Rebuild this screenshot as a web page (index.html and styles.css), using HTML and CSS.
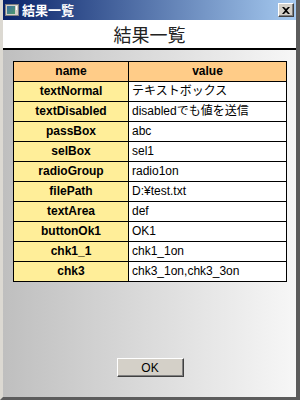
FILE: index.html
```html
<!DOCTYPE html>
<html lang="ja">
<head>
  <meta charset="UTF-8">
  <title>結果一覧</title>
  <link rel="stylesheet" href="styles.css">
</head>
<body>
  <div class="window">
    <div class="titlebar">
      <svg class="app-icon" width="14" height="12" viewBox="0 0 14 12">
        <rect x="0" y="0" width="14" height="12" fill="#d4d0c8"/>
        <rect x="0.5" y="0.5" width="13" height="11" fill="none" stroke="#808080"/>
        <defs>
          <linearGradient id="ig" x1="0" y1="0" x2="1" y2="1">
            <stop offset="0" stop-color="#3a6ea5"/>
            <stop offset="1" stop-color="#4f9a6a"/>
          </linearGradient>
        </defs>
        <rect x="2" y="2" width="8" height="8" fill="url(#ig)"/>
        <rect x="11" y="2" width="1" height="4" fill="#fff"/>
      </svg>
      <span class="title-text">結果一覧</span>
      <button class="close-btn" type="button">
        <svg width="8" height="7" viewBox="0 0 8 7">
          <path d="M0 0 L2 0 L4 2 L6 0 L8 0 L5 3.5 L8 7 L6 7 L4 5 L2 7 L0 7 L3 3.5 Z" fill="#000"/>
        </svg>
      </button>
    </div>
    <div class="heading">結果一覧</div>
    <div class="content">
      <table class="result-table">
        <thead>
          <tr>
            <th>name</th>
            <th>value</th>
          </tr>
        </thead>
        <tbody>
          <tr><td class="name">textNormal</td><td>テキストボックス</td></tr>
          <tr><td class="name">textDisabled</td><td>disabledでも値を送信</td></tr>
          <tr><td class="name">passBox</td><td>abc</td></tr>
          <tr><td class="name">selBox</td><td>sel1</td></tr>
          <tr><td class="name">radioGroup</td><td>radio1on</td></tr>
          <tr><td class="name">filePath</td><td>D:¥test.txt</td></tr>
          <tr><td class="name">textArea</td><td>def</td></tr>
          <tr><td class="name">buttonOk1</td><td>OK1</td></tr>
          <tr><td class="name">chk1_1</td><td>chk1_1on</td></tr>
          <tr><td class="name">chk3</td><td>chk3_1on,chk3_3on</td></tr>
        </tbody>
      </table>
      <button class="ok-btn" type="button">OK</button>
    </div>
  </div>
</body>
</html>
```

FILE: styles.css
```css
html, body {
  margin: 0;
  padding: 0;
}

body {
  font-family: "Noto Sans CJK JP", "Liberation Sans", sans-serif;
}

.window {
  box-sizing: border-box;
  width: 300px;
  height: 400px;
  display: flex;
  flex-direction: column;
  border-left: 3px solid #dcd9d2;
  border-right: 4px solid #5c5c5c;
  border-bottom: 3px solid #5c5c5c;
  background: #d4d0c8;
}

.titlebar {
  height: 20px;
  display: flex;
  align-items: center;
  padding: 0 2px 0 2px;
  background: linear-gradient(to right, #0a246a, #a6caf0);
}

.app-icon {
  margin-right: 3px;
}

.title-text {
  color: #fff;
  font-weight: bold;
  font-size: 13px;
  line-height: 20px;
  flex: 1;
}

.close-btn {
  box-sizing: border-box;
  width: 16px;
  height: 14px;
  padding: 0;
  display: flex;
  align-items: center;
  justify-content: center;
  background: #d4d0c8;
  border: 1px solid;
  border-color: #fff #404040 #404040 #fff;
  box-shadow: inset -1px -1px #808080;
}

.heading {
  height: 28px;
  line-height: 28px;
  background: #fff;
  border-bottom: 2px solid #000;
  text-align: center;
  font-size: 18px;
  color: #222;
}

.content {
  flex: 1;
  display: flex;
  flex-direction: column;
  align-items: center;
  padding: 11px 9px 20px 10px;
  background: linear-gradient(to right, #bfbfbf, #f7f7f7);
}

.result-table {
  width: 274px;
  border-collapse: collapse;
  font-family: "Liberation Sans", "Noto Sans CJK JP", sans-serif;
  font-size: 12px;
}

.result-table th,
.result-table td {
  border: 1px solid #000;
  height: 19px;
  padding: 0 3px;
  line-height: 17px;
}

.result-table th {
  background: #ffcc88;
  font-weight: bold;
  text-align: center;
}

.result-table th:first-child,
.result-table td.name {
  width: 108px;
}

.result-table td {
  background: #fff;
  text-align: left;
}

.result-table td.name {
  background: #ffee99;
  font-weight: bold;
  text-align: center;
}

.ok-btn {
  margin-top: auto;
  box-sizing: border-box;
  width: 67px;
  height: 19px;
  padding: 0;
  background: #d4d0c8;
  border: 1px solid;
  border-color: #fff #404040 #404040 #fff;
  box-shadow: inset -1px -1px #808080;
  font-family: "Liberation Sans", sans-serif;
  font-size: 12px;
  color: #000;
}
```
